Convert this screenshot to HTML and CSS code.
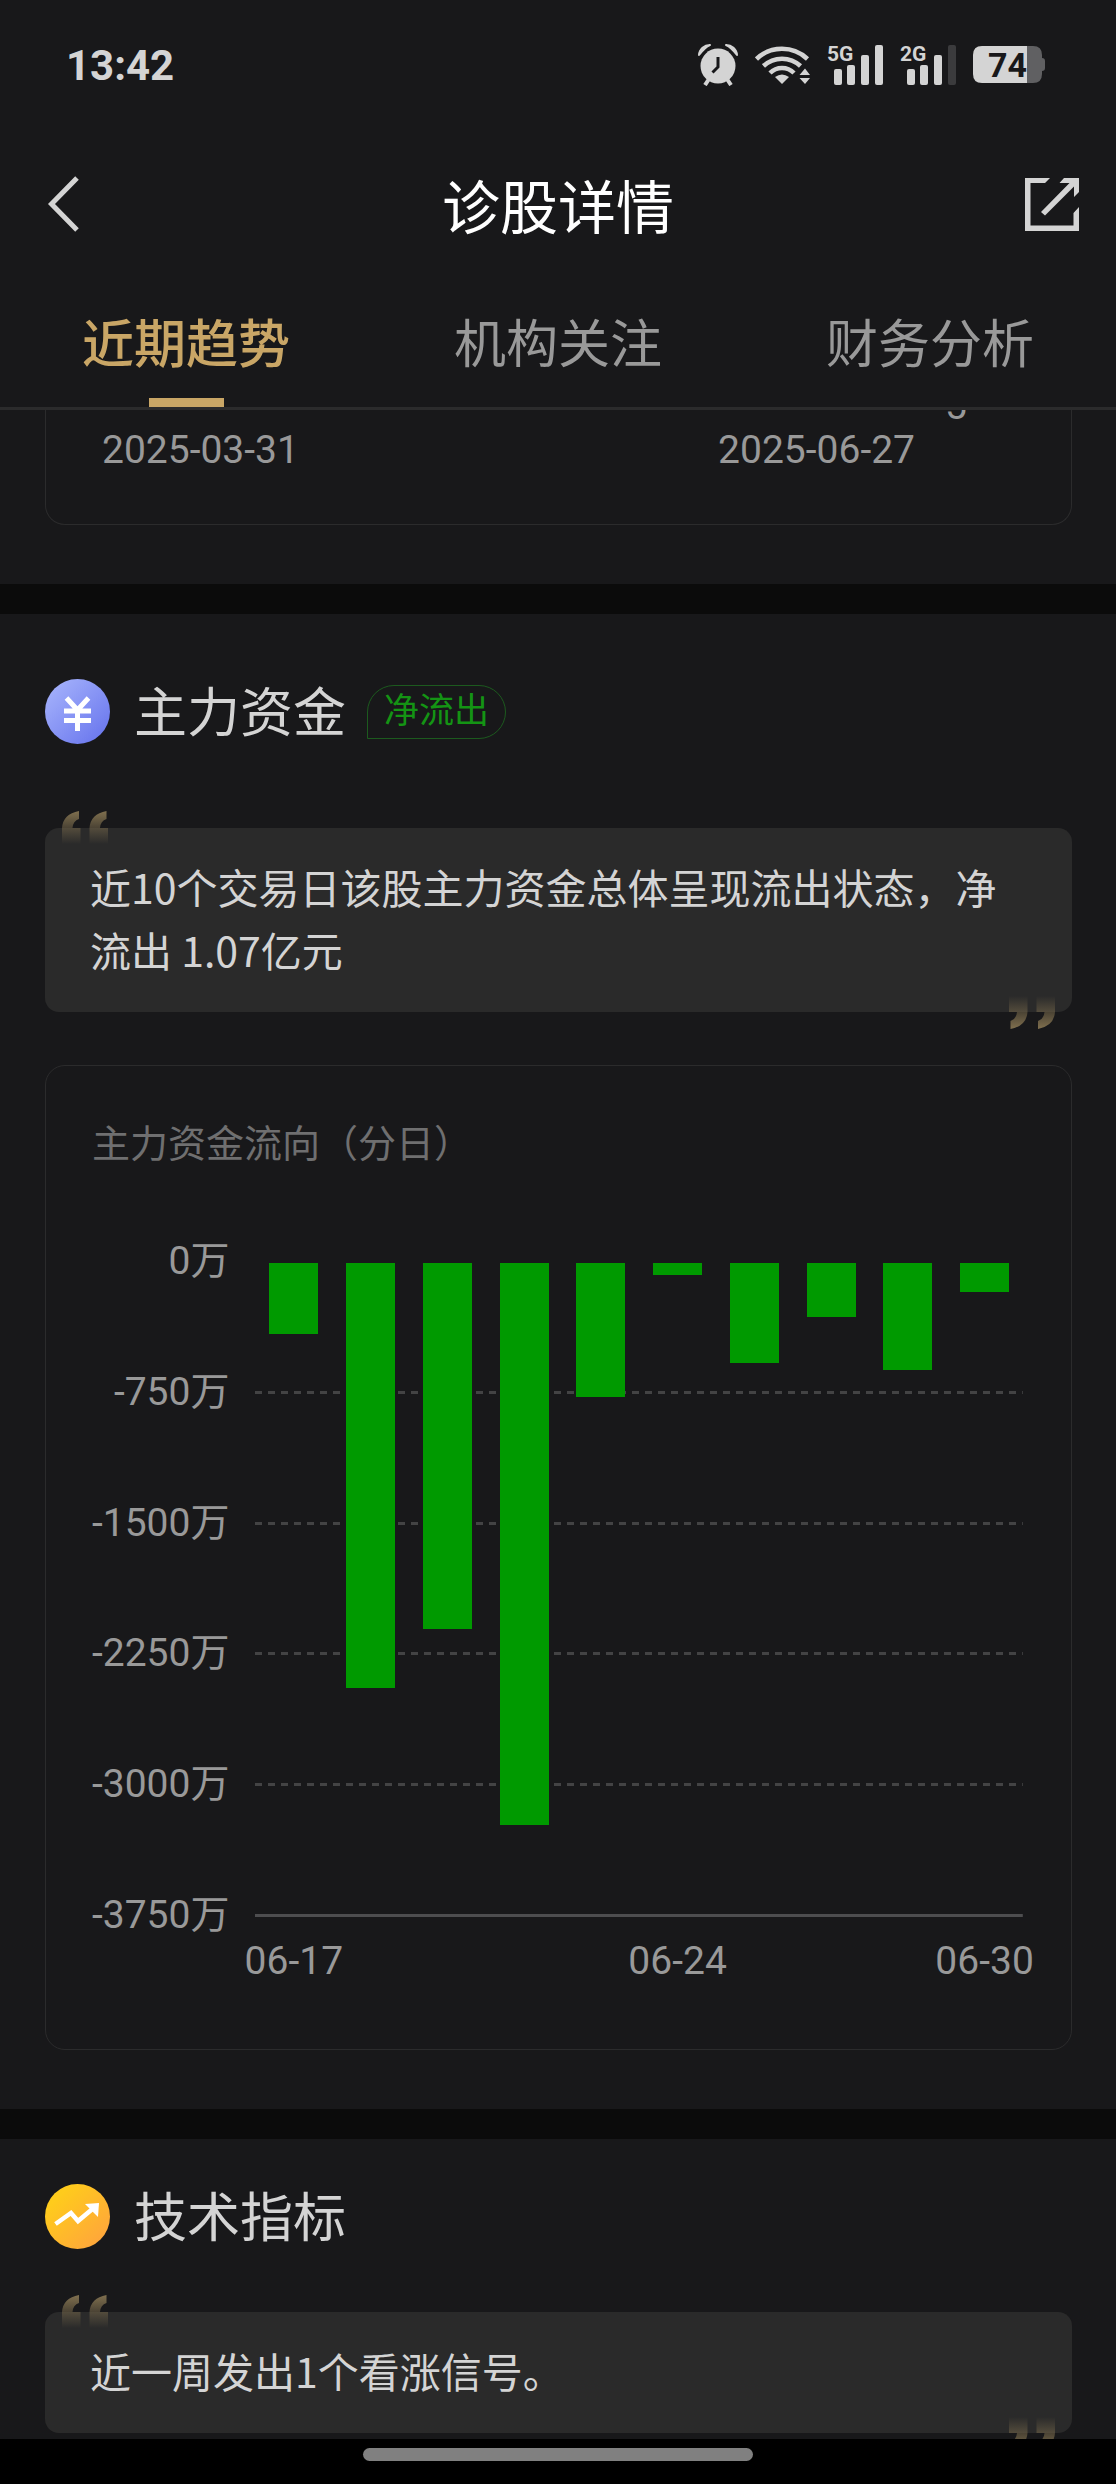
FILE: index.html
```html
<!DOCTYPE html>
<html lang="zh-CN">
<head>
    <meta charset="UTF-8">
    <meta name="viewport" content="width=device-width, initial-scale=1.0">
    <title>诊股详情</title>
    <link rel="stylesheet" href="styles.css">
</head>
<body>
    <div class="status-bar">
        <span class="time">13:42</span>
        <div class="status-icons">
            <svg width="40" height="42" viewBox="0 0 40 42">
                <path d="M1 11 A11 11 0 0 1 12 1 Q7 3 1 11Z M39 11 A11 11 0 0 0 28 1 Q33 3 39 11Z" fill="#d4d4d4" stroke="#d4d4d4" stroke-width="2" stroke-linejoin="round"/>
                <path d="M11 35 L7 41 M29 35 L33 41" stroke="#d4d4d4" stroke-width="4"/>
                <circle cx="20" cy="22" r="17.5" fill="#d4d4d4"/>
                <path d="M20 13 V23 L14.500 28.500" fill="none" stroke="#18181a" stroke-width="3"/>
            </svg>
            <svg width="55" height="38" viewBox="0 0 55 38">
                <g fill="none" stroke="#d4d4d4" stroke-width="4.500">
                    <path d="M1.500 13 A37 37 0 0 1 52.500 13"/>
                    <path d="M8.500 20 A27 27 0 0 1 45.500 20"/>
                    <path d="M15 27 A17 17 0 0 1 39 27"/>
                </g>
                <path d="M20 31 Q27 26 34 31 L27 38Z" fill="#d4d4d4"/>
                <path d="M44.500 29 L50 22.500 L55 29Z M44.500 32 L50 38 L55 32Z" fill="#d4d4d4"/>
            </svg>
            <svg width="56" height="52" viewBox="0 -5 56 52">
                <text class="network" x="0" y="17">5G</text>
                <g fill="#d4d4d4">
                    <rect x="7" y="25" width="8" height="16" rx="2"/>
                    <rect x="20" y="21" width="8" height="20" rx="2"/>
                    <rect x="34" y="11" width="8" height="30" rx="2"/>
                    <rect x="48" y="1" width="8" height="40" rx="2"/>
                </g>
            </svg>
            <svg width="56" height="52" viewBox="0 -5 56 52">
                <text class="network" x="0" y="17">2G</text>
                <g fill="#d4d4d4">
                    <rect x="7" y="25" width="8" height="16" rx="2"/>
                    <rect x="20" y="21" width="8" height="20" rx="2"/>
                    <rect x="34" y="11" width="8" height="30" rx="2"/>
                    <rect x="48" y="1" width="8" height="40" rx="2" fill="#3b3b3d"/>
                </g>
            </svg>
            <svg width="72" height="38" viewBox="0 0 72 38">
                <path d="M54 0 H60 Q69 0 69 9 V12 Q72 12 72 15 V22 Q72 25 69 25 V28 Q69 37 60 37 H54Z" fill="#606062"/>
                <path d="M9 0 H54 V37 H9 Q0 37 0 28 V9 Q0 0 9 0Z" fill="#d4d4d4"/>
                <text class="battery-level" x="15" y="31">74</text>
            </svg>
        </div>
    </div>

    <header class="header">
        <button class="icon-button" aria-label="返回">
            <svg width="56" height="56" viewBox="0 0 56 56" fill="none" stroke="#d4d4d4" stroke-width="5">
                <path d="M41 2 L15.500 28 L41 54"/>
            </svg>
        </button>
        <h1>诊股详情</h1>
        <button class="icon-button" aria-label="分享">
            <svg width="56" height="54" viewBox="0 0 56 54">
                <path d="M1 1 H26 L21 6 H6.500 V48.500 H49.500 V36 L55 30 V54 H1Z" fill="#d4d4d4"/>
                <path d="M55 1 V15 L50 20 V9.500 L21 38.500 L17 35 L45.500 6 H35.500 L40 1Z" fill="#d4d4d4"/>
            </svg>
        </button>
    </header>

    <nav class="tabs">
        <a class="tab active" href="#trend">近期趋势</a>
        <a class="tab" href="#institution">机构关注</a>
        <a class="tab" href="#finance">财务分析</a>
    </nav>

    <main class="content">
        <section class="section" id="trend">
            <div class="card card-cut">
                <div class="cut-row"><span>5</span></div>
                <div class="date-range">
                    <span>2025-03-31</span>
                    <span>2025-06-27</span>
                </div>
            </div>
        </section>

        <section class="section section-fund">
            <div class="section-title">
                <svg width="65" height="65" viewBox="0 0 65 65">
                    <defs>
                        <linearGradient id="blue" x1="0" y1="0" x2="1" y2="1">
                            <stop offset="0.100" stop-color="#a3b0fb"/>
                            <stop offset="0.900" stop-color="#6b78ee"/>
                        </linearGradient>
                    </defs>
                    <circle cx="32.500" cy="32.500" r="32.500" fill="url(#blue)"/>
                    <path d="M21.500 19 L32.500 31 L43.500 19 M32.500 30 V52 M19 32 H46 M19 41.500 H46" fill="none" stroke="#fff" stroke-width="5"/>
                </svg>
                <h2>主力资金</h2>
                <span class="tag">净流出</span>
            </div>

            <div class="quote">
                <svg class="quote-open" width="46" height="33" viewBox="0 0 46 33">
                    <defs>
                        <linearGradient id="gold" x1="0" y1="0" x2="0" y2="1">
                            <stop offset="0" stop-color="#80704f"/>
                            <stop offset="1" stop-color="#80704f" stop-opacity="0"/>
                        </linearGradient>
                    </defs>
                    <path d="M17 0 V8 Q11 10 10.500 17 H18.500 V33 H0 V17 Q1 3 17 0Z M44.500 0 V8 Q38.500 10 38 17 H46 V33 H27.500 V17 Q28.500 3 44.500 0Z" fill="url(#gold)"/>
                </svg>
                <p>近10个交易日该股主力资金总体呈现流出状态，净流出 1.07亿元</p>
                <svg class="quote-close" width="46" height="33" viewBox="0 0 46 33">
                    <path transform="rotate(180 23 16.500)" d="M17 0 V8 Q11 10 10.500 17 H18.500 V33 H0 V17 Q1 3 17 0Z M44.500 0 V8 Q38.500 10 38 17 H46 V33 H27.500 V17 Q28.500 3 44.500 0Z" fill="url(#gold)"/>
                </svg>
            </div>

            <div class="card">
                <h3>主力资金流向（分日）</h3>
                <div class="chart">
                    <div class="y-axis">
                        <span>0万</span>
                        <span>-750万</span>
                        <span>-1500万</span>
                        <span>-2250万</span>
                        <span>-3000万</span>
                        <span>-3750万</span>
                    </div>
                    <div class="grid-lines">
                        <i></i><i></i><i></i><i></i><i></i>
                    </div>
                    <div class="bars">
                        <div class="bar" style="height: 10.900%"></div>
                        <div class="bar" style="height: 65%"></div>
                        <div class="bar" style="height: 56%"></div>
                        <div class="bar" style="height: 85.900%"></div>
                        <div class="bar" style="height: 20.500%"></div>
                        <div class="bar" style="height: 1.900%"></div>
                        <div class="bar" style="height: 15.300%"></div>
                        <div class="bar" style="height: 8.300%"></div>
                        <div class="bar" style="height: 16.400%"></div>
                        <div class="bar" style="height: 4.500%"></div>
                    </div>
                    <div class="x-axis">
                        <span>06-17</span>
                        <span></span>
                        <span></span>
                        <span></span>
                        <span></span>
                        <span>06-24</span>
                        <span></span>
                        <span></span>
                        <span></span>
                        <span>06-30</span>
                    </div>
                </div>
            </div>
        </section>

        <section class="section section-tech">
            <div class="section-title">
                <svg width="65" height="65" viewBox="0 0 65 65">
                    <defs>
                        <linearGradient id="orange" x1="0" y1="0" x2="1" y2="1">
                            <stop offset="0.200" stop-color="#ffcb1c"/>
                            <stop offset="0.900" stop-color="#ffa53c"/>
                        </linearGradient>
                    </defs>
                    <circle cx="32.500" cy="32.500" r="32.500" fill="url(#orange)"/>
                    <path d="M10.500 40 L26 29 L33 37 L48 24.500" fill="none" stroke="#fff" stroke-width="4.500"/>
                    <path d="M40 20 L54 19 L53 33Z" fill="#fff"/>
                </svg>
                <h2>技术指标</h2>
            </div>

            <div class="quote">
                <svg class="quote-open" width="46" height="33" viewBox="0 0 46 33">
                    <path d="M17 0 V8 Q11 10 10.500 17 H18.500 V33 H0 V17 Q1 3 17 0Z M44.500 0 V8 Q38.500 10 38 17 H46 V33 H27.500 V17 Q28.500 3 44.500 0Z" fill="url(#gold)"/>
                </svg>
                <p>近一周发出1个看涨信号。</p>
                <svg class="quote-close" width="46" height="33" viewBox="0 0 46 33">
                    <path transform="rotate(180 23 16.500)" d="M17 0 V8 Q11 10 10.500 17 H18.500 V33 H0 V17 Q1 3 17 0Z M44.500 0 V8 Q38.500 10 38 17 H46 V33 H27.500 V17 Q28.500 3 44.500 0Z" fill="url(#gold)"/>
                </svg>
            </div>
        </section>
    </main>

    <div class="nav-bar"><div class="nav-pill"></div></div>
</body>
</html>
```
FILE: styles.css
```css
* {
    box-sizing: border-box;
    margin: 0;
    padding: 0;
}

body {
    font-family: Roboto, "Noto Sans CJK SC", sans-serif;
    background-color: #18181a;
    color: #d4d4d4;
    height: 100vh;
    display: flex;
    flex-direction: column;
    overflow: hidden;
}

svg {
    display: block;
    flex-shrink: 0;
}

/* Status bar */
.status-bar {
    display: flex;
    align-items: center;
    justify-content: space-between;
    height: 130px;
    padding: 0 71px 0 66px;
}

.time {
    font-size: 42px;
    font-weight: 700;
}

.status-icons {
    display: flex;
    align-items: center;
    gap: 17px;
}

.network {
    font-size: 21px;
    font-weight: 700;
    fill: #d4d4d4;
}

.battery-level {
    font-size: 34px;
    font-weight: 700;
    fill: #18181a;
}

/* Header */
.header {
    display: flex;
    align-items: center;
    justify-content: space-between;
    height: 148px;
    padding: 0 36px;
}

.header h1 {
    font-size: 58px;
    font-weight: 400;
    color: #fff;
}

.icon-button {
    background: none;
    border: none;
    cursor: pointer;
}

/* Tabs */
.tabs {
    display: flex;
    height: 132px;
    border-bottom: 3px solid #2b2b2c;
}

.tab {
    flex: 1;
    display: flex;
    flex-direction: column;
    align-items: center;
    justify-content: space-between;
    padding-top: 16px;
    font-size: 52px;
    line-height: 104px;
    color: #999;
    text-decoration: none;
}

.tab.active {
    color: #c9a666;
    font-weight: 500;
}

.tab.active::after {
    content: '';
    width: 75px;
    height: 9px;
    background-color: #c9a666;
}

/* Content */
.content {
    flex: 1;
    min-height: 0;
    overflow: hidden;
}

.section {
    padding: 0 44px 59px 45px;
}

.section + .section {
    border-top: 30px solid #0b0b0b;
}

.section-fund {
    padding-top: 65px;
}

.section-tech {
    padding-top: 45px;
}

.section-title {
    display: flex;
    align-items: center;
    height: 65px;
    margin-bottom: 84px;
}

.section-tech .section-title {
    margin-bottom: 63px;
}

.section-title h2 {
    margin-left: 24px;
    padding-bottom: 5px;
    font-size: 53px;
    font-weight: 400;
}

.tag {
    margin-left: 21px;
    padding: 0 16px;
    border: 1px solid #1c5a1e;
    border-radius: 27px 27px 27px 0;
    font-size: 35px;
    line-height: 52px;
    color: #149414;
}

.card {
    padding: 48px 48px 65px 46px;
    border: 1px solid #2b2b2c;
    border-radius: 20px;
}

.card h3 {
    font-size: 38px;
    font-weight: 400;
    line-height: 60px;
    color: #6f6f70;
}

/* Tail of the card scrolled under the tabs */
.card-cut {
    padding: 0 48px 44px;
    border-top: none;
    border-radius: 0 0 20px 20px;
}

.cut-row {
    display: flex;
    align-items: flex-end;
    justify-content: flex-end;
    height: 10px;
    overflow: hidden;
    padding-right: 56px;
    font-size: 39px;
    line-height: 28px;
    color: #999;
}

.date-range {
    display: flex;
    justify-content: space-between;
    padding: 0 108px 0 8px;
    font-size: 39px;
    line-height: 60px;
    color: #999;
}

.quote {
    position: relative;
    padding: 27px 45px 31px;
    background-color: #2a2a2a;
    border-radius: 14px;
    font-family: "Noto Sans CJK SC", sans-serif;
    font-size: 41px;
    line-height: 63px;
}

.quote + .card {
    margin-top: 53px;
}

.quote-open {
    position: absolute;
    top: -17px;
    left: 17px;
}

.quote-close {
    position: absolute;
    right: 17px;
    bottom: -17px;
}

/* Chart */
.chart {
    display: grid;
    grid-template-columns: auto 1fr;
    grid-template-rows: 654px auto;
    column-gap: 26px;
    margin-top: 89px;
    font-size: 39px;
    line-height: 46px;
    color: #999;
}

.y-axis {
    display: flex;
    flex-direction: column;
    justify-content: space-between;
    margin: -25px 0 -21px;
    text-align: right;
}

.grid-lines,
.bars,
.x-axis {
    grid-column: 2;
}

.grid-lines,
.bars {
    grid-row: 1;
    display: flex;
}

.grid-lines {
    flex-direction: column;
}

.grid-lines i {
    flex: 1;
    background: repeating-linear-gradient(to right, #434344 0 7px, transparent 7px 13px) bottom / 100% 3px no-repeat;
}

.grid-lines i:last-child {
    background: linear-gradient(#4d4d4f, #4d4d4f) bottom / 100% 3px no-repeat;
}

.bars {
    justify-content: space-around;
}

.bar {
    width: 49px;
    background-color: #009a00;
}

.x-axis {
    display: flex;
    padding-top: 21px;
}

.x-axis span {
    flex: 1 1 0;
    width: 0;
    display: flex;
    justify-content: center;
    white-space: nowrap;
}

/* Gesture bar */
.nav-bar {
    display: flex;
    justify-content: center;
    height: 45px;
    padding-top: 9px;
    background-color: #000;
}

.nav-pill {
    width: 35%;
    height: 13px;
    border-radius: 7px;
    background-color: #808080;
}
```
